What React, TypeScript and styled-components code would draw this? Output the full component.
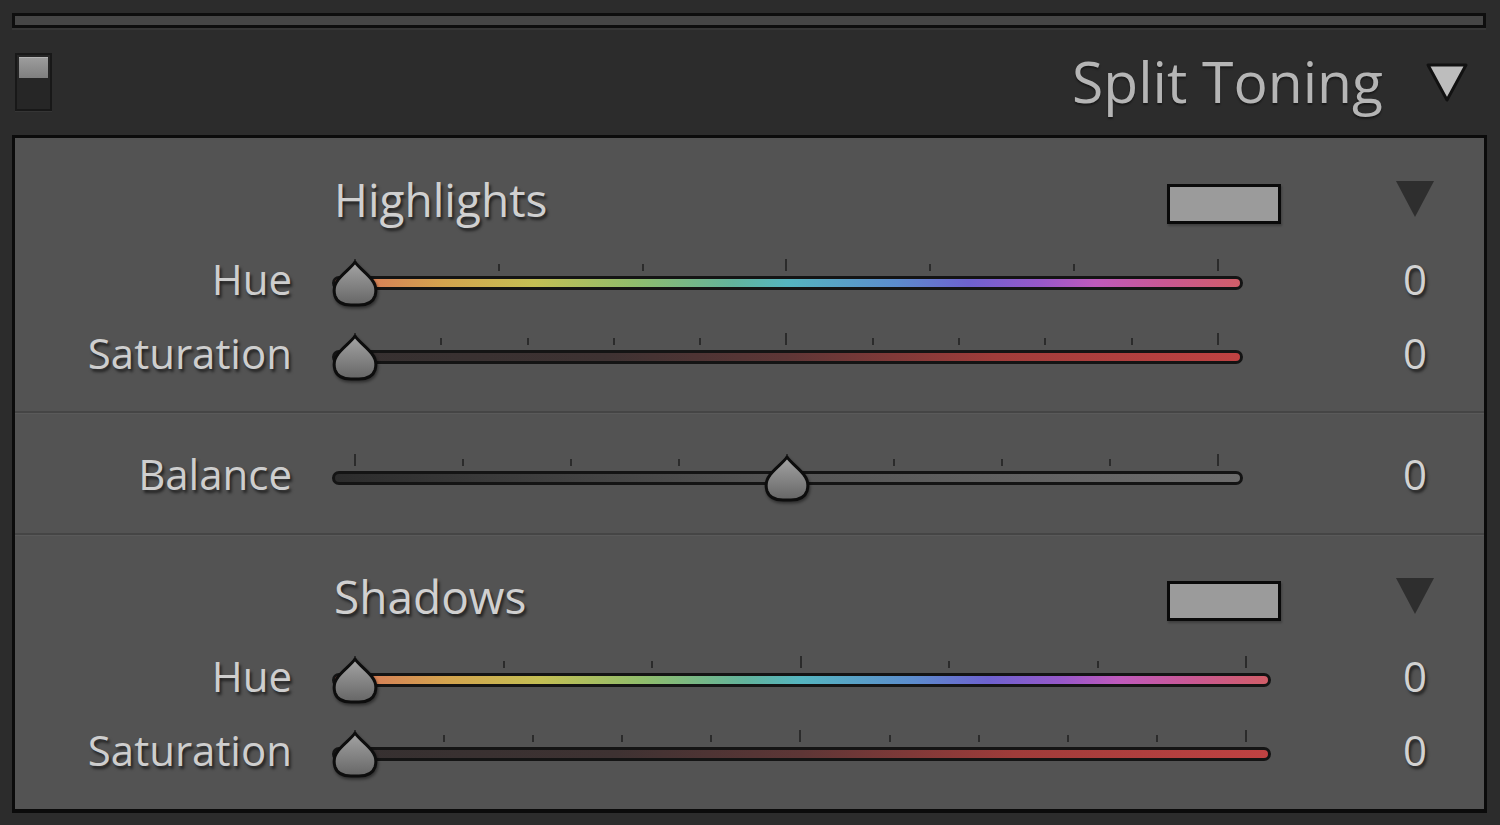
import React from "react";
import styled, { createGlobalStyle } from "styled-components";

const GlobalStyle = createGlobalStyle`
  html, body { margin: 0; padding: 0; background: #2c2c2c; }
  body { font-family: "Open Sans", "Noto Sans", sans-serif; }
  * { box-sizing: border-box; }
`;

const Page = styled.div`
  width: 1500px;
  height: 825px;
  overflow: hidden;
  background: #2c2c2c;
  padding: 13px 13px 0 12px;
  display: flex;
  flex-direction: column;
`;

const TopBar = styled.div`
  height: 15px;
  margin-right: 1px;
  border: 3px solid #0e0e0e;
  background: #464646;
  box-shadow: 0 2px 0 #363636;
`;

const Header = styled.div`
  height: 107px;
  display: flex;
  align-items: center;
  padding: 0 18px 0 3px;
`;

const Switch = styled.div`
  width: 37px;
  height: 58px;
  border: 2px solid #181818;
  background: #262626;
  padding: 2px;
  display: flex;
  flex-direction: column;
  box-shadow: 0 1px 0 #353535;
`;

const SwitchTop = styled.div`
  height: 21px;
  background: linear-gradient(#9c9c9c, #7f7f7f);
  border-top: 1px solid #b4b4b4;
`;

const PanelTitle = styled.div`
  margin-left: auto;
  margin-right: 42px;
  font-size: 57px;
  line-height: 57px;
  color: #b5b5b5;
  text-shadow: 0 2px 2px rgba(0, 0, 0, 0.45);
`;

const Panel = styled.div`
  flex: 1;
  border: 3px solid #0b0b0b;
  border-bottom-width: 4px;
  background: #535353;
  display: flex;
  flex-direction: column;
  margin-bottom: 12px;
`;

const Section = styled.div<{ $pt: number; $pb?: number; $last?: boolean }>`
  padding-top: ${(p) => p.$pt}px;
  padding-bottom: ${(p) => p.$pb ?? 0}px;
  flex: ${(p) => (p.$last ? 1 : "none")};
  border-bottom: ${(p) => (p.$last ? "none" : "2px solid #454545")};
  box-shadow: ${(p) => (p.$last ? "none" : "0 1px 0 #5a5a5a")};
  display: flex;
  flex-direction: column;
`;

const Row = styled.div<{ $h: number; $mb?: number }>`
  height: ${(p) => p.$h}px;
  margin-bottom: ${(p) => p.$mb ?? 0}px;
  display: flex;
  align-items: center;
`;

const Label = styled.div`
  width: 277px;
  text-align: right;
  font-size: 42px;
  line-height: 42px;
  padding-bottom: 6px;
  color: #cecece;
  text-shadow: 2px 3px 3px rgba(0, 0, 0, 0.6);
  white-space: nowrap;
`;

const Main = styled.div`
  flex: 1;
  margin-left: 40px;
  display: flex;
  align-items: center;
`;

const ValueCell = styled.div`
  width: 64px;
  margin-right: 37px;
  display: flex;
  justify-content: center;
  font-size: 42px;
  line-height: 42px;
  padding-bottom: 6px;
  color: #d2d2d2;
  text-shadow: 2px 3px 3px rgba(0, 0, 0, 0.6);
`;

const GroupTitle = styled.div`
  font-size: 46px;
  line-height: 46px;
  padding-left: 2px;
  color: #d0d0d0;
  text-shadow: 2px 3px 3px rgba(0, 0, 0, 0.6);
`;

const Swatch = styled.div`
  margin-left: auto;
  margin-right: 102px;
  margin-top: 10px;
  width: 114px;
  height: 40px;
  border: 3px solid #0a0a0a;
  background: #9b9b9b;
  box-shadow: 1px 2px 2px rgba(0, 0, 0, 0.25);
`;

const SmallArrow = styled.svg`
  margin-top: 6px;
  display: block;
`;

const Slider = styled.div<{ $w: number }>`
  position: relative;
  width: ${(p) => p.$w}px;
  padding-bottom: 16px;
  display: flex;
  flex-direction: column;
  gap: 5px;
`;

const Ticks = styled.div`
  height: 12px;
  padding: 0 24px 0 22px;
  display: flex;
  justify-content: space-between;
  align-items: flex-end;
`;

const Tick = styled.span<{ $major: boolean }>`
  width: 2px;
  height: ${(p) => (p.$major ? 12 : 7)}px;
  background: #2b2b2b;
`;

const Track = styled.div<{ $bg: string }>`
  height: 14px;
  border: 3px solid #141414;
  border-radius: 7px;
  background: ${(p) => p.$bg};
`;

const ThumbSvg = styled.svg`
  position: absolute;
  top: 1px;
  filter: drop-shadow(1px 2px 1.5px rgba(0, 0, 0, 0.45));
`;

const HUE =
  "linear-gradient(90deg, #d8705c 0%, #d4a44e 12%, #c4bf54 22%, #90bd6c 33%, #62b39c 44%, #55b5c0 50%, #5c8ccd 62%, #6e62cf 70%, #9858c9 78%, #bf5abc 84%, #c95892 92%, #d15e68 100%)";
const SAT =
  "linear-gradient(90deg, #353030 0%, #3e3232 30%, #5e3636 50%, #a03c3a 73%, #bf4242 100%)";
const BAL = "linear-gradient(90deg, #2c2c2c 0%, #555555 50%, #6c6c6c 100%)";

function Thumb({ left }: { left: number }) {
  return (
    <ThumbSvg width="46" height="47" viewBox="0 0 46 47" style={{ left }}>
      <defs>
        <linearGradient id="thumbFill" x1="0" y1="0" x2="0" y2="1">
          <stop offset="0" stopColor="#a4a4a4" />
          <stop offset="1" stopColor="#666666" />
        </linearGradient>
      </defs>
      <path
        d="M23 2 C26 7 36 14 40 20 C44 25 44.5 31 43 36 C41 42 35 45 27 45 L19 45 C11 45 5 42 3 36 C1.5 31 2 25 6 20 C10 14 20 7 23 2 Z"
        fill="url(#thumbFill)"
        stroke="#0d0d0d"
        strokeWidth="3"
        strokeLinejoin="round"
      />
    </ThumbSvg>
  );
}

function SliderControl({
  width,
  divisions,
  bg,
  frac,
}: {
  width: number;
  divisions: number;
  bg: string;
  frac: number;
}) {
  const ticks = Array.from({ length: divisions + 1 }, (_, i) => i);
  return (
    <Slider $w={width}>
      <Ticks>
        {ticks.map((i) => (
          <Tick key={i} $major={i === 0 || i === divisions || i * 2 === divisions} />
        ))}
      </Ticks>
      <Track $bg={bg} />
      <Thumb left={Math.round(frac * (width - 48))} />
    </Slider>
  );
}

function SliderRow({
  label,
  width,
  divisions,
  bg,
  frac,
}: {
  label: string;
  width: number;
  divisions: number;
  bg: string;
  frac: number;
}) {
  return (
    <Row $h={74}>
      <Label>{label}</Label>
      <Main>
        <SliderControl width={width} divisions={divisions} bg={bg} frac={frac} />
      </Main>
      <ValueCell>0</ValueCell>
    </Row>
  );
}

function GroupHeader({ title }: { title: string }) {
  return (
    <Row $h={60} $mb={16}>
      <Label />
      <Main>
        <GroupTitle>{title}</GroupTitle>
        <Swatch />
      </Main>
      <ValueCell>
        <SmallArrow width="38" height="36" viewBox="0 0 38 36">
          <polygon points="0,0 38,0 19,36" fill="#2e2e2e" />
        </SmallArrow>
      </ValueCell>
    </Row>
  );
}

export default function App() {
  return (
    <>
      <GlobalStyle />
      <Page>
        <TopBar />
        <Header>
          <Switch>
            <SwitchTop />
          </Switch>
          <PanelTitle>Split Toning</PanelTitle>
          <svg width="44" height="42" viewBox="0 0 44 42">
            <polygon
              points="3,4 41,4 22,39"
              fill="#bdbdbd"
              stroke="#111"
              strokeWidth="3"
              strokeLinejoin="round"
            />
          </svg>
        </Header>
        <Panel>
          <Section $pt={31} $pb={18}>
            <GroupHeader title="Highlights" />
            <SliderRow label="Hue" width={911} divisions={6} bg={HUE} frac={0} />
            <SliderRow label="Saturation" width={911} divisions={10} bg={SAT} frac={0} />
          </Section>
          <Section $pt={27} $pb={19}>
            <SliderRow label="Balance" width={911} divisions={8} bg={BAL} frac={0.5} />
          </Section>
          <Section $pt={31} $last>
            <GroupHeader title="Shadows" />
            <SliderRow label="Hue" width={939} divisions={6} bg={HUE} frac={0} />
            <SliderRow label="Saturation" width={939} divisions={10} bg={SAT} frac={0} />
          </Section>
        </Panel>
      </Page>
    </>
  );
}
